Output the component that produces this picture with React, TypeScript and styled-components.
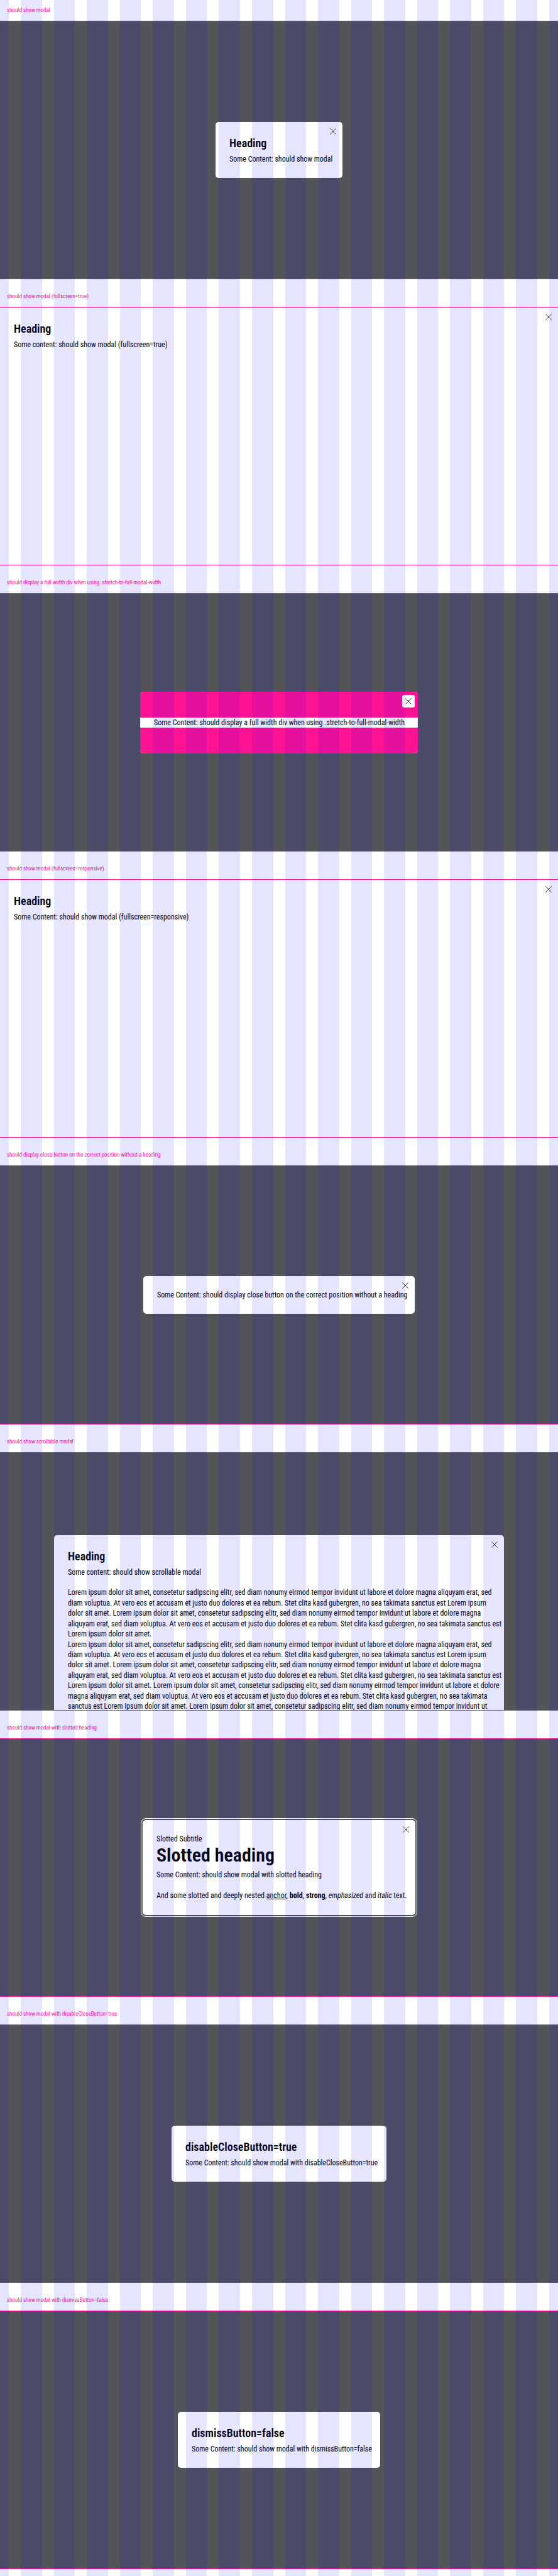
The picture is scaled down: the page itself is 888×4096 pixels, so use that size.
import React from 'react';
import styled, { createGlobalStyle, css } from 'styled-components';

const GlobalStyle = createGlobalStyle`
  *, *::before, *::after { box-sizing: border-box; }
  body {
    margin: 0;
    background: #fff;
    color: #010205;
    font-family: "Roboto Condensed", Roboto, "Liberation Sans", sans-serif;
    font-size: 12px;
    line-height: 1.37;
  }
`;

const Page = styled.main`
  position: relative;
  display: grid;
  grid-template-columns: minmax(0, 1fr);
  grid-auto-rows: 1fr;
  min-height: 100vh;
`;

const GridOverlay = styled.div`
  position: absolute;
  inset: 0;
  z-index: 10;
  display: grid;
  grid-template-columns: 14px repeat(16, 1fr) 14px;
  column-gap: 19px;
  pointer-events: none;
`;

const GridColumn = styled.span`
  background: rgba(0, 0, 255, 0.1);
`;

const Example = styled.section`
  display: flex;
  flex-direction: column;
  padding-bottom: 11px;
`;

const Label = styled.h2`
  margin: 0;
  height: 33px;
  padding: 10px 11px 0;
  color: #ff1493;
  font-size: 9px;
  font-weight: 400;
  line-height: 12px;
`;

const Stage = styled.div<{ $dark: boolean; $scroll: boolean }>`
  flex: 1 0 411px;
  display: flex;
  justify-content: center;
  align-items: ${p => (p.$scroll ? 'flex-start' : 'center')};
  min-height: 0;
  border: solid #ff1493;
  border-width: 1px 0;
  overflow: hidden;
  background: ${p => (p.$dark ? '#535457' : '#fff')};
  ${p => p.$scroll && css`
    height: 411px;
    padding: 131px 86px 0;
  `}
`;

const Dialog = styled.div<{ $width?: number; $fullscreen: boolean; $focused: boolean }>`
  position: relative;
  flex: none;
  width: ${p => (p.$width ? `${p.$width}px` : '100%')};
  max-width: 100%;
  padding: 22px;
  border-radius: 5px;
  background: #fff;
  ${p => p.$fullscreen && css`
    align-self: stretch;
    border-radius: 0;
  `}
  ${p => p.$focused && css`
    outline: 1px solid #fff;
    outline-offset: 2px;
  `}
`;

const CloseButton = styled.button`
  position: absolute;
  top: 5px;
  right: 5px;
  display: flex;
  padding: 5px;
  border: 0;
  border-radius: 3px;
  background: #fff;
  color: #010205;
  cursor: pointer;
`;

const Heading = styled.h3`
  margin: 0 0 6px;
  font-size: 18px;
  font-weight: 600;
  line-height: 23px;
`;

const SlottedHeading = styled.h3`
  margin: 0 0 6px;
  font-size: 30px;
  font-weight: 600;
  line-height: 35px;
`;

const Text = styled.p`
  margin: 0;
  white-space: nowrap;
`;

const Link = styled.a`
  color: inherit;
`;

const StretchBlock = styled.div`
  margin: -22px;
  padding: 41px 0;
  border-radius: 5px;
  background: #ff1493;
`;

const StretchText = styled(Text)`
  padding: 0 22px;
  background: #fff;
`;

const CloseIcon = () => (
  <svg width="10" height="10" viewBox="0 0 10 10" fill="none" stroke="currentColor" strokeWidth="0.8" aria-hidden="true">
    <path d="M0.3 0.3L9.7 9.7M9.7 0.3L0.3 9.7" />
  </svg>
);

type ModalExampleProps = {
  label: string;
  heading?: string;
  width?: number;
  fullscreen?: boolean;
  focused?: boolean;
  scroll?: boolean;
  closable?: boolean;
  children: React.ReactNode;
};

const ModalExample = ({
  label,
  heading,
  width,
  fullscreen = false,
  focused = false,
  scroll = false,
  closable = true,
  children,
}: ModalExampleProps) => (
  <Example>
    <Label>{label}</Label>
    <Stage $dark={!fullscreen} $scroll={scroll}>
      <Dialog role="dialog" aria-label={heading ?? label} $width={width} $fullscreen={fullscreen} $focused={focused}>
        {heading && <Heading>{heading}</Heading>}
        {children}
        {closable && (
          <CloseButton type="button" aria-label="Dismiss modal">
            <CloseIcon />
          </CloseButton>
        )}
      </Dialog>
    </Stage>
  </Example>
);

const lorem = [
  'Lorem ipsum dolor sit amet, consetetur sadipscing elitr, sed diam nonumy eirmod tempor invidunt ut labore et dolore magna aliquyam erat, sed',
  'diam voluptua. At vero eos et accusam et justo duo dolores et ea rebum. Stet clita kasd gubergren, no sea takimata sanctus est Lorem ipsum',
  'dolor sit amet. Lorem ipsum dolor sit amet, consetetur sadipscing elitr, sed diam nonumy eirmod tempor invidunt ut labore et dolore magna',
  'aliquyam erat, sed diam voluptua. At vero eos et accusam et justo duo dolores et ea rebum. Stet clita kasd gubergren, no sea takimata sanctus est',
];

const scrollLines = [
  ...lorem,
  'Lorem ipsum dolor sit amet.',
  ...lorem,
  'Lorem ipsum dolor sit amet. Lorem ipsum dolor sit amet, consetetur sadipscing elitr, sed diam nonumy eirmod tempor invidunt ut labore et dolore',
  'magna aliquyam erat, sed diam voluptua. At vero eos et accusam et justo duo dolores et ea rebum. Stet clita kasd gubergren, no sea takimata',
  'sanctus est Lorem ipsum dolor sit amet. Lorem ipsum dolor sit amet, consetetur sadipscing elitr, sed diam nonumy eirmod tempor invidunt ut',
];

export default function App() {
  return (
    <Page>
      <GlobalStyle />
      <ModalExample label="should show modal" heading="Heading" width={202}>
        <Text>Some Content: should show modal</Text>
      </ModalExample>
      <ModalExample label="should show modal (fullscreen=true)" heading="Heading" fullscreen>
        <Text>Some content: should show modal (fullscreen=true)</Text>
      </ModalExample>
      <ModalExample label="should display a full width div when using .stretch-to-full-modal-width" width={442}>
        <StretchBlock>
          <StretchText>Some Content: should display a full width div when using .stretch-to-full-modal-width</StretchText>
        </StretchBlock>
      </ModalExample>
      <ModalExample label="should show modal (fullscreen=responsive)" heading="Heading" fullscreen>
        <Text>Some Content: should show modal (fullscreen=responsive)</Text>
      </ModalExample>
      <ModalExample label="should display close button on the correct position without a heading" width={432}>
        <Text>Some Content: should display close button on the correct position without a heading</Text>
      </ModalExample>
      <ModalExample label="should show scrollable modal" heading="Heading" scroll>
        <Text>Some content: should show scrollable modal</Text>
        <br />
        {scrollLines.map((line, i) => (
          <Text key={i}>{line}</Text>
        ))}
      </ModalExample>
      <ModalExample label="should show modal with slotted heading" width={434} focused>
        <Text>Slotted Subtitle</Text>
        <SlottedHeading>Slotted heading</SlottedHeading>
        <Text>Some Content: should show modal with slotted heading</Text>
        <br />
        <Text>
          And some slotted and deeply nested <Link href="#anchor">anchor</Link>, <b>bold</b>, <strong>strong</strong>,{' '}
          <em>emphasized</em> and <i>italic</i> text.
        </Text>
      </ModalExample>
      <ModalExample
        label="should show modal with disableCloseButton=true"
        heading="disableCloseButton=true"
        width={342}
        closable={false}
      >
        <Text>Some Content: should show modal with disableCloseButton=true</Text>
      </ModalExample>
      <ModalExample
        label="should show modal with dismissButton=false"
        heading="dismissButton=false"
        width={322}
        closable={false}
      >
        <Text>Some Content: should show modal with dismissButton=false</Text>
      </ModalExample>
      <GridOverlay aria-hidden="true">
        {Array.from({ length: 18 }, (_, i) => (
          <GridColumn key={i} />
        ))}
      </GridOverlay>
    </Page>
  );
}
